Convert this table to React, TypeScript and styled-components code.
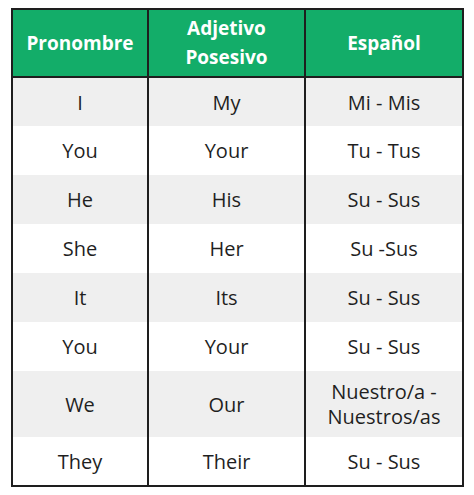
import React from "react";
import { styled, createGlobalStyle } from "styled-components";

const GlobalStyle = createGlobalStyle`
  html, body {
    margin: 0;
    padding: 0;
    background: #ffffff;
  }
  body {
    font-family: "Open Sans", "Liberation Sans", sans-serif;
  }
`;

const rows: [string, string, string][] = [
  ["I", "My", "Mi - Mis"],
  ["You", "Your", "Tu - Tus"],
  ["He", "His", "Su - Sus"],
  ["She", "Her", "Su -Sus"],
  ["It", "Its", "Su - Sus"],
  ["You", "Your", "Su - Sus"],
  ["We", "Our", "Nuestro/a - Nuestros/as"],
  ["They", "Their", "Su - Sus"],
];

export default function App() {
  return (
    <>
      <GlobalStyle />
      <Page>
        <Table>
          <colgroup>
            <col style={{ width: 136 }} />
            <col style={{ width: 157 }} />
            <col style={{ width: 158 }} />
          </colgroup>
          <thead>
            <tr>
              <HeadCell>Pronombre</HeadCell>
              <HeadCell>
                Adjetivo
                <br />
                Posesivo
              </HeadCell>
              <HeadCell>Español</HeadCell>
            </tr>
          </thead>
          <tbody>
            {rows.map((r, i) => (
              <Row key={i} $shaded={i % 2 === 0}>
                {r.map((c, j) => (
                  <Cell key={j}>{c}</Cell>
                ))}
              </Row>
            ))}
          </tbody>
        </Table>
      </Page>
    </>
  );
}

const Page = styled.div`
  padding: 8px 0 0 11px;
`;

const Table = styled.table`
  width: 451px;
  border-collapse: collapse;
  table-layout: fixed;
  border: 2px solid #1e1e1e;
`;

const HeadCell = styled.th`
  background: #13ad69;
  color: #ffffff;
  font-size: 19px;
  font-weight: 700;
  line-height: 29px;
  height: 66px;
  padding: 4px 6px;
  text-align: center;
  vertical-align: middle;
  border-left: 2px solid #1e1e1e;
  border-right: 2px solid #1e1e1e;
  border-bottom: 2px solid #1e1e1e;
  box-sizing: border-box;
`;

const Row = styled.tr<{ $shaded: boolean }>`
  background: ${(p) => (p.$shaded ? "#efefef" : "#ffffff")};
  height: 49px;
`;

const Cell = styled.td`
  color: #1f1f1f;
  font-size: 20px;
  line-height: 25px;
  padding: 8px 10px;
  text-align: center;
  vertical-align: middle;
  border-left: 2px solid #1e1e1e;
  border-right: 2px solid #1e1e1e;
`;
